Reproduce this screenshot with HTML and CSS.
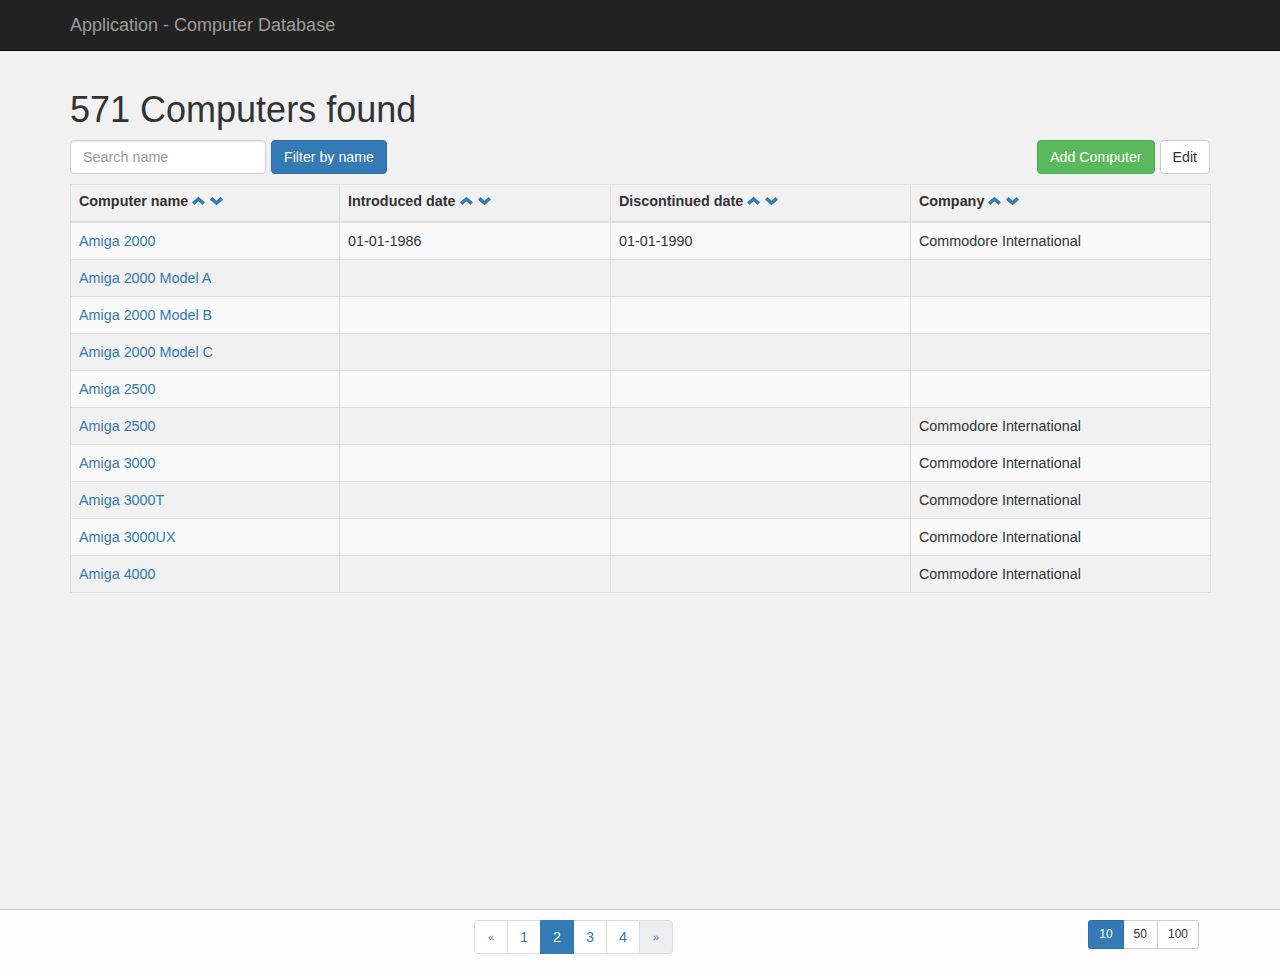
FILE: index.html
```html
<!DOCTYPE html>
<html>
<head>
<meta charset="utf-8">
<title>Computer Database</title>
<link rel="stylesheet" href="styles.css">
</head>
<body>
<header class="navbar">
  <div class="container">
    <a class="brand" href="#">Application - Computer Database</a>
  </div>
</header>
<main class="main">
  <div class="container">
    <h1 class="title">571 Computers found</h1>
    <div class="actions">
      <form class="search">
        <input class="search-input" type="text" placeholder="Search name">
        <button class="btn btn-primary" type="button">Filter by name</button>
      </form>
      <div class="right-actions">
        <a class="btn btn-success" href="#">Add Computer</a>
        <a class="btn btn-default" href="#">Edit</a>
      </div>
    </div>
    <table class="computers">
      <colgroup>
        <col class="c1"><col class="c2"><col class="c3"><col class="c4">
      </colgroup>
      <thead>
        <tr>
          <th>Computer name<span class="sort"><svg class="chev" viewBox="0 0 13 8"><path d="M0 5.2 L6.5 -0.3 L13 5.2 L10.6 8 L6.5 4.2 L2.4 8 Z"/></svg><svg class="chev" viewBox="0 0 13 8"><path d="M0 2.8 L2.4 0 L6.5 3.8 L10.6 0 L13 2.8 L6.5 8.3 Z"/></svg></span></th>
          <th>Introduced date<span class="sort"><svg class="chev" viewBox="0 0 13 8"><path d="M0 5.2 L6.5 -0.3 L13 5.2 L10.6 8 L6.5 4.2 L2.4 8 Z"/></svg><svg class="chev" viewBox="0 0 13 8"><path d="M0 2.8 L2.4 0 L6.5 3.8 L10.6 0 L13 2.8 L6.5 8.3 Z"/></svg></span></th>
          <th>Discontinued date<span class="sort"><svg class="chev" viewBox="0 0 13 8"><path d="M0 5.2 L6.5 -0.3 L13 5.2 L10.6 8 L6.5 4.2 L2.4 8 Z"/></svg><svg class="chev" viewBox="0 0 13 8"><path d="M0 2.8 L2.4 0 L6.5 3.8 L10.6 0 L13 2.8 L6.5 8.3 Z"/></svg></span></th>
          <th>Company<span class="sort"><svg class="chev" viewBox="0 0 13 8"><path d="M0 5.2 L6.5 -0.3 L13 5.2 L10.6 8 L6.5 4.2 L2.4 8 Z"/></svg><svg class="chev" viewBox="0 0 13 8"><path d="M0 2.8 L2.4 0 L6.5 3.8 L10.6 0 L13 2.8 L6.5 8.3 Z"/></svg></span></th>
        </tr>
      </thead>
      <tbody>
        <tr><td><a href="#">Amiga 2000</a></td><td>01-01-1986</td><td>01-01-1990</td><td>Commodore International</td></tr>
        <tr><td><a href="#">Amiga 2000 Model A</a></td><td></td><td></td><td></td></tr>
        <tr><td><a href="#">Amiga 2000 Model B</a></td><td></td><td></td><td></td></tr>
        <tr><td><a href="#">Amiga 2000 Model C</a></td><td></td><td></td><td></td></tr>
        <tr><td><a href="#">Amiga 2500</a></td><td></td><td></td><td></td></tr>
        <tr><td><a href="#">Amiga 2500</a></td><td></td><td></td><td>Commodore International</td></tr>
        <tr><td><a href="#">Amiga 3000</a></td><td></td><td></td><td>Commodore International</td></tr>
        <tr><td><a href="#">Amiga 3000T</a></td><td></td><td></td><td>Commodore International</td></tr>
        <tr><td><a href="#">Amiga 3000UX</a></td><td></td><td></td><td>Commodore International</td></tr>
        <tr><td><a href="#">Amiga 4000</a></td><td></td><td></td><td>Commodore International</td></tr>
      </tbody>
    </table>
  </div>
</main>
<footer class="footer">
  <div class="footer-inner">
    <ul class="pagination">
      <li><a class="arrow" href="#">&laquo;</a></li>
      <li><a href="#">1</a></li>
      <li><a class="active" href="#">2</a></li>
      <li><a href="#">3</a></li>
      <li><a href="#">4</a></li>
      <li><a class="arrow disabled" href="#">&raquo;</a></li>
    </ul>
    <div class="btn-group">
      <a class="btn-sm active" href="#">10</a>
      <a class="btn-sm" href="#">50</a>
      <a class="btn-sm" href="#">100</a>
    </div>
  </div>
</footer>
</body>
</html>
```

FILE: styles.css
```css
* { box-sizing: border-box; }
html, body { height: 100%; }
body {
  margin: 0;
  font-family: "Liberation Sans", Arial, Helvetica, sans-serif;
  font-size: 14.35px;
  line-height: 20px;
  color: #333;
  background: #f1f1f1;
  display: flex;
  flex-direction: column;
  min-height: 100vh;
}
a { color: #337ab7; text-decoration: none; }

.container {
  width: 1140px;
  margin: 0 auto;
}

.navbar {
  background: #222;
  border-bottom: 1px solid #080808;
  height: 51px;
}
.navbar .container { display: flex; align-items: center; height: 50px; }
.brand {
  color: #9d9d9d;
  font-size: 18px;
  line-height: 20px;
}

.main { flex: 1; }

.title {
  font-size: 36px;
  font-weight: 500;
  line-height: 39.6px;
  margin: 39px 0 10px;
}

.actions {
  display: flex;
  justify-content: space-between;
  align-items: center;
  margin-bottom: 10px;
}
.search { display: flex; gap: 5px; margin: 0; }
.search-input {
  width: 196px;
  height: 34px;
  padding: 6px 12px;
  font: inherit;
  color: #555;
  background: #fff;
  border: 1px solid #ccc;
  border-radius: 4px;
  box-shadow: inset 0 1px 1px rgba(0,0,0,.075);
}
.search-input::placeholder { color: #999; }
.right-actions { display: flex; gap: 5px; }

.btn {
  display: inline-block;
  height: 34px;
  padding: 6px 12px;
  font: inherit;
  font-size: 14.2px;
  line-height: 20px;
  border: 1px solid transparent;
  border-radius: 4px;
  cursor: pointer;
}
.btn-primary { color: #fff; background: #337ab7; border-color: #2e6da4; }
.btn-success { color: #fff; background: #5cb85c; border-color: #4cae4c; }
.btn-default { color: #333; background: #fff; border-color: #ccc; }

.computers {
  width: 1140px;
  border-collapse: collapse;
  border: 1px solid #ddd;
  table-layout: fixed;
}
.c1 { width: 269px; }
.c2 { width: 271px; }
.c3 { width: 300px; }
.c4 { width: 300px; }
.computers th, .computers td {
  border: 1px solid #ddd;
  padding: 8px;
  text-align: left;
  vertical-align: top;
  line-height: 20px;
  height: 37px;
}
.computers th {
  font-weight: bold;
  border-bottom-width: 2px;
  height: 38px;
  padding-top: 6px;
  padding-bottom: 10px;
}
.computers tbody tr:nth-child(odd) { background: #f9f9f9; }

.sort { display: inline-flex; gap: 5px; margin-left: 4px; vertical-align: 1px; }
.chev { width: 13px; height: 8px; fill: #337ab7; overflow: visible; }

.footer {
  background: #fdfdfd;
  border-top: 1px solid #ccc;
  height: 60px;
}
.footer-inner {
  display: flex;
  justify-content: space-between;
  align-items: flex-start;
  padding: 10px 81px 0 474px;
}
.pagination {
  display: flex;
  list-style: none;
  margin: 0;
  padding: 0;
}
.pagination li a {
  display: block;
  width: 34px;
  height: 34px;
  margin-left: -1px;
  text-align: center;
  line-height: 32px;
  font-size: 14.35px;
  color: #337ab7;
  background: #fff;
  border: 1px solid #ddd;
}
.pagination li:first-child a { margin-left: 0; border-radius: 4px 0 0 4px; }
.pagination li:last-child a { border-radius: 0 4px 4px 0; }
.pagination a.arrow { font-size: 11px; }
.pagination a.active { background: #337ab7; border-color: #337ab7; color: #fff; position: relative; z-index: 1; }
.pagination a.disabled { background: #eee; color: #337ab7; }

.btn-group { display: flex; }
.btn-sm {
  display: block;
  height: 29px;
  padding: 4px 10px;
  font-size: 12px;
  line-height: 19px;
  color: #333;
  background: #fff;
  border: 1px solid #ccc;
  margin-left: -1px;
}
.btn-sm:first-child { margin-left: 0; border-radius: 3px 0 0 3px; }
.btn-sm:last-child { border-radius: 0 3px 3px 0; }
.btn-sm.active { background: #337ab7; border-color: #2e6da4; color: #fff; position: relative; z-index: 1; }
```
